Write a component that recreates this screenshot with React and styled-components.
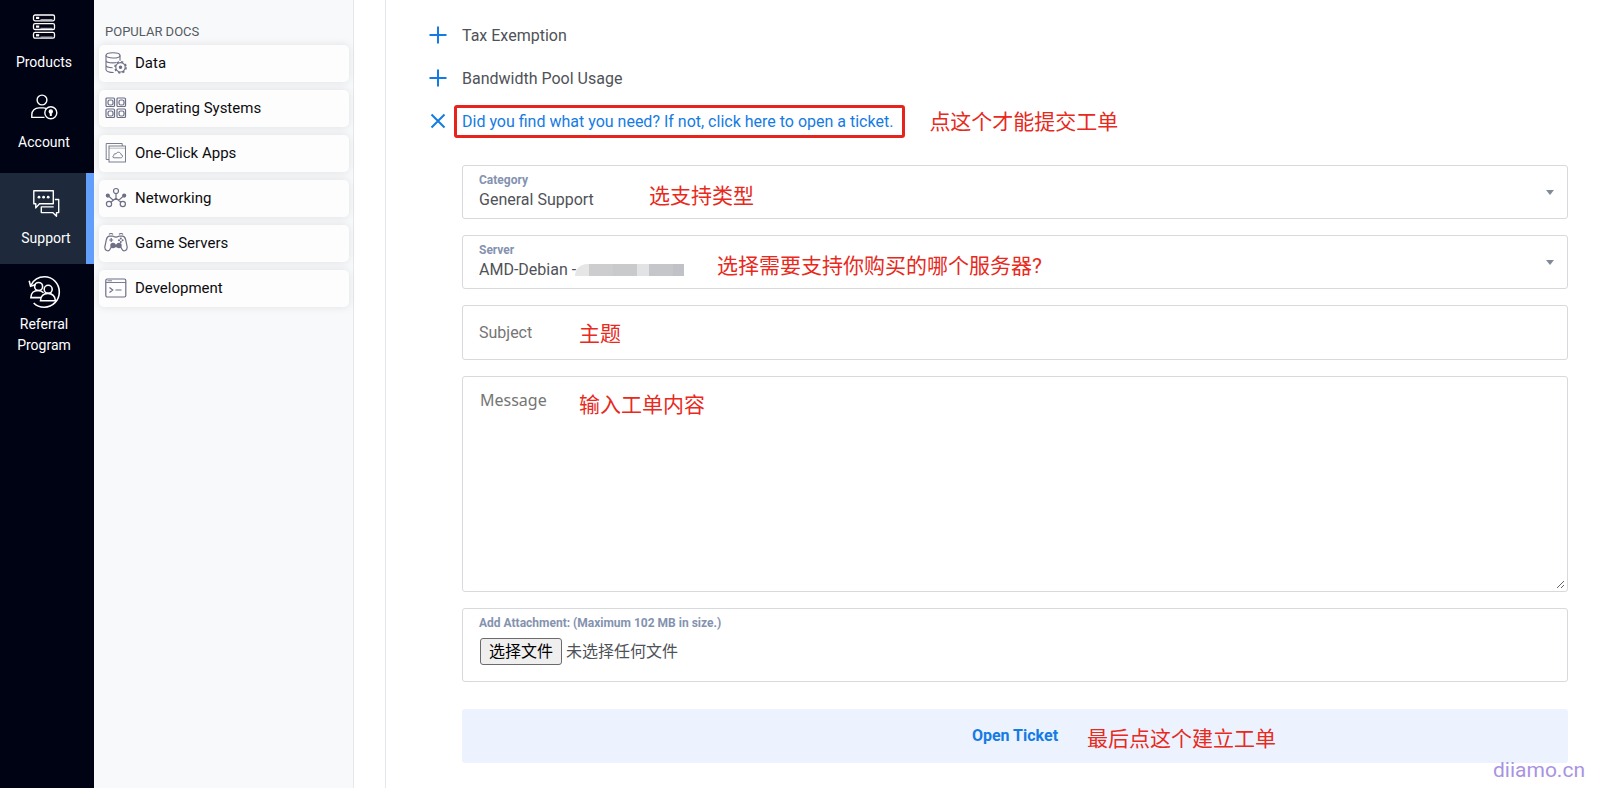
import { useState } from 'react';
import styled, { createGlobalStyle } from 'styled-components';

const GlobalStyle = createGlobalStyle`
  * {
    box-sizing: border-box;
  }
  body {
    margin: 0;
    background: #fff;
    color: #4f5258;
    font-family: Roboto, "Noto Sans CJK SC", sans-serif;
    font-size: 16px;
  }
  button, input, select {
    font-family: inherit;
    font-size: inherit;
  }
`;

const ProductsIcon = () => (
  <svg width='24' height='26' viewBox='0 0 24 26' fill='none' stroke='currentColor' strokeWidth='1.3'>
    {[1, 9.7, 18.4].map((y) => (
      <g key={y}>
        <rect x='1.5' y={y} width='21' height='5.8' rx='1.6' />
        <path d={`M4 ${y + 2.9}h3.2`} strokeWidth='2.2' />
        <path d={`M8.5 ${y + 4.6}h12`} strokeWidth='0.7' />
      </g>
    ))}
  </svg>
);

const AccountIcon = () => (
  <svg width='28' height='26' viewBox='0 0 28 26' fill='none' stroke='currentColor' strokeWidth='1.4'>
    <circle cx='12' cy='6' r='4.9' />
    <path d='M14.5 23.4H1.8v-2.8c0-4 3.2-6.7 7.2-6.7h4.3c1 0 2 .2 2.8.5' />
    <circle cx='20.8' cy='18.8' r='6' />
    <circle cx='20.8' cy='17.4' r='1.5' fill='currentColor' />
    <path d='M20.8 17.6v4.4' strokeWidth='2' />
  </svg>
);

const SupportIcon = () => (
  <svg width='28' height='28' viewBox='0 0 28 28' fill='none' stroke='currentColor' strokeWidth='1.4' strokeLinejoin='round'>
    <path d='M1.8 1.7h19.5v13.1H7.5l-3.7 4.1v-4.1h-2z' />
    <path d='M22.8 10.5h3.9v13.1h-2.2v3.7l-3.8-3.7H9.3v-5.7h12.4' />
    <g fill='currentColor' stroke='none'>
      <circle cx='7' cy='8.2' r='1.4' />
      <circle cx='11.6' cy='8.2' r='1.4' />
      <circle cx='16.2' cy='8.2' r='1.4' />
    </g>
  </svg>
);

const ReferralIcon = () => (
  <svg width='34' height='34' viewBox='0 0 34 34' fill='none' stroke='currentColor' strokeWidth='1.6'>
    <path d='M4.2 10C6.6 5 11.4 1.8 17.5 1.8c8.4 0 14.8 6.8 14.8 15.1S25.7 32.2 17.3 32.2c-4.500 0-8-1.400-10.600-4.200' />
    <path d='M2.2 5.700l1.400 5.500 5.300-1.800' />
    <circle cx='11.6' cy='11.5' r='4' />
    <path d='M14.2 22.600H3.900c0-4.300 3-7.100 7.200-7.100 2.400 0 4.200.9 5.400 2.300' />
    <circle cx='21.2' cy='14.3' r='4' />
    <path d='M13.5 25.800c0-4.600 3.200-7.400 7.400-7.400s7.500 2.800 7.500 7.400z' />
  </svg>
);

const DataIcon = () => (
  <svg width='22' height='22' viewBox='0 0 22 22' fill='none' stroke='currentColor' strokeWidth='1.1'>
    <ellipse cx='8' cy='3.4' rx='7' ry='2.6' />
    <path d='M1 3.400v14.400c0 1.400 3.400 2.700 7.600 2.700M15 3.400v5.400M1 8.200c0 1.500 3 2.700 7 2.700 1.500 0 2.600-.1 3.600-.4M1 13c0 1.500 3 2.700 6.600 2.700' />
    <circle cx='15.5' cy='15.3' r='4.7' />
    <circle cx='15.5' cy='15.3' r='5.6' strokeDasharray='2.2 2.2' strokeWidth='1.5' />
    <circle cx='15.5' cy='15.3' r='1.2' fill='currentColor' />
  </svg>
);

const SystemsIcon = () => (
  <svg width='22' height='22' viewBox='0 0 22 22' fill='none' stroke='currentColor' strokeWidth='1.2'>
    {[[1, 1], [12, 1], [1, 12], [12, 12]].map(([x, y]) => (
      <g key={`${x}-${y}`}>
        <rect x={x} y={y} width='8.5' height='8.5' rx='1' />
        <rect x={x + 2} y={y + 2} width='5' height='5' rx='1.8' />
      </g>
    ))}
  </svg>
);

const AppsIcon = () => (
  <svg width='22' height='22' viewBox='0 0 22 22' fill='none' stroke='currentColor' strokeWidth='0.9'>
    <path d='M4 17.500H1.200V1.500h16V4' />
    <rect x='4' y='4' width='16.5' height='16' />
    <path d='M4 6.200h16.500' strokeWidth='0.5' />
    <path d='M9 15.800h6.600c2.400 0 2.600-3 .4-3.200-.2-2.700-4-3.300-5-.8-1.800-.4-2.600 1-2.200 1.900-1.500.2-1.300 2.100.2 2.100z' />
  </svg>
);

const NetworkIcon = () => (
  <svg width='22' height='22' viewBox='0 0 22 22' fill='none' stroke='currentColor' strokeWidth='1.2'>
    <circle cx='11' cy='4' r='2.5' />
    <circle cx='4' cy='17' r='2.6' />
    <circle cx='17.8' cy='17' r='2.6' />
    <path d='M11 6.500v4.700l-5.200 4M11 11.200l5 4M3.200 8.800l5.200 4.600M18.800 8.800l-5.200 4.600' />
    <circle cx='2.8' cy='8.6' r='1.5' fill='currentColor' />
    <circle cx='19.2' cy='8.6' r='1.5' fill='currentColor' />
  </svg>
);

const GameIcon = () => (
  <svg width='24' height='22' viewBox='0 0 24 22' fill='none' stroke='currentColor' strokeWidth='1.2'>
    <path d='M5.500 4.200h3.300c1 0 1 .9 3.200.9s2.200-.9 3.200-.9h3.300c1.900 0 2.600 1.400 3.100 3.300l1.500 7.200c.6 3.700-3.500 5.600-5.100 2.600l-1.500-2.600h-9L6 17.300c-1.600 3-5.700 1.100-5.100-2.600l1.500-7.200c.5-1.900 1.200-3.300 3.100-3.300z' />
    <path d='M5 2.300c1-1.100 3-1.100 4 0M15 2.300c1-1.100 3-1.100 4 0M7.200 6v4M5.200 8h4' />
    <g fill='currentColor' stroke='none'>
      <circle cx='9' cy='13.5' r='2.7' />
      <circle cx='15' cy='13.5' r='2.7' />
      <path d='M9 12.500h6v2H9z' />
      <circle cx='16.8' cy='6.5' r='1' />
      <circle cx='16.8' cy='9.9' r='1' />
      <circle cx='15' cy='8.2' r='1' />
      <circle cx='18.6' cy='8.2' r='1' />
    </g>
  </svg>
);

const DevIcon = () => (
  <svg width='22' height='22' viewBox='0 0 22 22' fill='none' stroke='currentColor' strokeWidth='1.2'>
    <rect x='0.8' y='2' width='20' height='18' rx='1.5' />
    <path d='M.8 5.500h20M2.500 3.800h4.500' strokeWidth='0.9' />
    <path d='M4.500 10.500l3.200 2.500-3.200 2.500M10.500 13h6' />
  </svg>
);

const navItems = [
  { text: 'Products', icon: ProductsIcon },
  { text: 'Account', icon: AccountIcon },
  { text: 'Support', icon: SupportIcon, active: true },
  { text: 'Referral Program', icon: ReferralIcon, large: true },
];

const docs = [
  { text: 'Data', icon: DataIcon },
  { text: 'Operating Systems', icon: SystemsIcon },
  { text: 'One-Click Apps', icon: AppsIcon },
  { text: 'Networking', icon: NetworkIcon },
  { text: 'Game Servers', icon: GameIcon },
  { text: 'Development', icon: DevIcon },
];

const Toggle = ({ text, open, highlight, note, onClick }) => (
  <ToggleRow>
    <ToggleButton type='button' aria-expanded={!!open} $open={open} onClick={onClick}>
      <ToggleIcon width='18' height='18' viewBox='0 0 18 18'>
        <path d={open ? 'M2.500 2.500l13 13M15.500 2.500l-13 13' : 'M9 .5v17M.5 9h17'} />
      </ToggleIcon>
      <ToggleText $highlight={highlight}>{text}</ToggleText>
    </ToggleButton>
    {note && <Note>{note}</Note>}
  </ToggleRow>
);

const Arrow = () => (
  <ArrowIcon width='8' height='5' viewBox='0 0 8 5' aria-hidden='true'>
    <path d='M0 0h8L4 5z' fill='#818b98' />
  </ArrowIcon>
);

const App = () => {
  const [open, setOpen] = useState(true);
  const [fileName, setFileName] = useState('未选择任何文件');

  return (
    <Page>
      <GlobalStyle />
      <Sidebar>
        {navItems.map(({ text, icon: Icon, active, large }) => (
          <NavLink key={text} href='#' $active={active} $large={large}>
            <NavIcon $large={large}>
              <Icon />
            </NavIcon>
            {text}
          </NavLink>
        ))}
      </Sidebar>
      <Docs>
        <DocsTitle>POPULAR DOCS</DocsTitle>
        <DocsList>
          {docs.map(({ text, icon: Icon }) => (
            <DocCard key={text} href='#'>
              <DocIcon>
                <Icon />
              </DocIcon>
              {text}
            </DocCard>
          ))}
        </DocsList>
      </Docs>
      <Main>
        <Toggle text='Tax Exemption' />
        <Toggle text='Bandwidth Pool Usage' />
        <Toggle
          text='Did you find what you need? If not, click here to open a ticket.'
          open={open}
          highlight
          note='点这个才能提交工单'
          onClick={() => setOpen(!open)}
        />
        {open && (
          <Form onSubmit={(e) => e.preventDefault()}>
            <Field>
              <FieldLabel htmlFor='category'>Category</FieldLabel>
              <Select id='category'>
                <option>General Support</option>
              </Select>
              <Arrow />
              <FieldNote $left={186} $top={16}>选支持类型</FieldNote>
            </Field>
            <Field>
              <FieldLabel htmlFor='server'>Server</FieldLabel>
              <Select id='server'>
                <option>AMD-Debian -</option>
              </Select>
              <Mosaic />
              <Arrow />
              <FieldNote $left={254} $top={16}>选择需要支持你购买的哪个服务器?</FieldNote>
            </Field>
            <Field>
              <Input type='text' aria-label='Subject' placeholder='Subject' />
              <FieldNote $left={116} $top={14}>主题</FieldNote>
            </Field>
            <Field>
              <Textarea aria-label='Message' placeholder='Message' />
              <FieldNote $left={116} $top={14}>输入工单内容</FieldNote>
            </Field>
            <Field>
              <FieldLabel htmlFor='attachment'>Add Attachment: (Maximum 102 MB in size.)</FieldLabel>
              <FileRow>
                <FileInput
                  id='attachment'
                  type='file'
                  onChange={(e) => setFileName(e.target.files[0]?.name || '未选择任何文件')}
                />
                <FileButton htmlFor='attachment'>选择文件</FileButton>
                <span>{fileName}</span>
              </FileRow>
            </Field>
            <Submit type='submit'>
              <SubmitText>
                Open Ticket
                <SubmitNote>最后点这个建立工单</SubmitNote>
              </SubmitText>
            </Submit>
          </Form>
        )}
      </Main>
      <Watermark>diiamo.cn</Watermark>
    </Page>
  );
};

const Page = styled.div`
  display: flex;
  min-height: 100vh;
  position: relative;
`;

const Sidebar = styled.nav`
  flex: 0 0 94px;
  padding-top: 3px;
  background: #000314;
`;

const NavLink = styled.a`
  display: flex;
  flex-direction: column;
  align-items: center;
  gap: ${({ $large }) => ($large ? '5px' : '11px')};
  margin-top: ${({ $active }) => ($active ? '10px' : '0')};
  padding: ${({ $active, $large }) => ($active ? '16px 0 15px 6px' : $large ? '11px 0 10px 2px' : '10px 0 10px 2px')};
  border-right: 8px solid ${({ $active }) => ($active ? '#629ffb' : 'transparent')};
  background: ${({ $active }) => ($active ? '#1e293b' : 'transparent')};
  color: #fff;
  font-size: 14px;
  line-height: 21px;
  text-align: center;
  text-decoration: none;
`;

const NavIcon = styled.span`
  display: flex;
  align-items: center;
  justify-content: center;
  height: ${({ $large }) => ($large ? '34px' : '28px')};
`;

const Docs = styled.aside`
  flex: 0 0 260px;
  padding: 22px 4px 0 5px;
  border-right: 1px solid #e5e7ea;
  background: #f8f9fb;
`;

const DocsTitle = styled.h2`
  margin: 0;
  padding: 0 6px 3px;
  color: #555961;
  font-size: 13px;
  font-weight: 400;
  line-height: 20px;
`;

const DocsList = styled.div`
  display: flex;
  flex-direction: column;
  gap: 8px;
`;

const DocCard = styled.a`
  display: flex;
  align-items: center;
  gap: 8px;
  height: 37px;
  padding: 0 6px 2px;
  border-radius: 5px;
  background: #fdfdfe;
  box-shadow: 0 0 8px rgba(0, 0, 0, 0.1);
  color: #0c0c0e;
  font-size: 15px;
  text-decoration: none;
`;

const DocIcon = styled.span`
  display: flex;
  justify-content: center;
  width: 22px;
  color: #6c6f85;
  svg {
    flex: none;
  }
`;

const Main = styled.main`
  flex: 1;
  min-width: 0;
  margin-left: 31px;
  padding: 14px 31px 24px 43px;
  border-left: 1px solid #e5e7ea;
`;

const ToggleRow = styled.div`
  display: flex;
  align-items: center;
  gap: 24px;
  height: 43px;
`;

const ToggleButton = styled.button`
  display: flex;
  align-items: center;
  gap: 7px;
  padding: 0;
  border: none;
  background: none;
  color: ${({ $open }) => ($open ? '#157be4' : '#4f5258')};
  cursor: pointer;
`;

const ToggleIcon = styled.svg`
  margin-bottom: 2px;
  stroke: #157be4;
  stroke-width: 2px;
`;

const ToggleText = styled.span`
  padding: ${({ $highlight }) => ($highlight ? '0 9px 0 5px' : '0 5px')};
  border: 3px solid ${({ $highlight }) => ($highlight ? '#e8231d' : 'transparent')};
  border-radius: 3px;
  line-height: 27px;
`;

const Note = styled.span`
  color: #e8291c;
  font-size: 21px;
  font-weight: 400;
  line-height: 28px;
  white-space: nowrap;
`;

const FieldNote = styled(Note)`
  position: absolute;
  top: ${({ $top }) => $top}px;
  left: ${({ $left }) => $left}px;
  pointer-events: none;
`;

const Form = styled.form`
  display: flex;
  flex-direction: column;
  gap: 16px;
  padding: 22px 0 0 33px;
`;

const Field = styled.div`
  position: relative;
  display: flex;
  flex-direction: column;
  border: 1px solid #d8d9db;
  border-radius: 3px;
  background: #fff;
`;

const FieldLabel = styled.label`
  padding: 6px 16px 0;
  color: #8492af;
  font-size: 12px;
  font-weight: 700;
  line-height: 16px;
`;

const Select = styled.select`
  height: 30px;
  padding: 0 32px 8px 16px;
  border: none;
  appearance: none;
  background: transparent;
  color: #4f5258;
`;

const ArrowIcon = styled.svg`
  position: absolute;
  top: 24px;
  right: 13px;
  pointer-events: none;
`;

const Mosaic = styled.span`
  position: absolute;
  top: 28px;
  left: 112px;
  width: 109px;
  height: 12px;
  border-top-left-radius: 12px;
  background: linear-gradient(
    90deg,
    #e6e6e7 0 14px,
    #cdcdcf 14px 38px,
    #c9cacc 38px 62px,
    #e2e3e5 62px 74px,
    #c5c6ca 74px 98px,
    #c0c2c7 98px
  );
`;

const Input = styled.input`
  height: 53px;
  padding: 0 16px;
  border: none;
  background: transparent;
  &::placeholder {
    color: #757575;
  }
`;

const Textarea = styled.textarea`
  height: 212px;
  margin: 0 2px 2px 0;
  padding: 12px 17px;
  border: none;
  background: transparent;
  font-family: "Noto Sans", "Noto Sans CJK SC", sans-serif;
  font-size: 16px;
  resize: vertical;
  &::placeholder {
    color: #757575;
  }
`;

const FileRow = styled.div`
  display: flex;
  align-items: center;
  gap: 4px;
  padding: 7px 17px 16px;
  line-height: 25px;
`;

const FileInput = styled.input`
  position: absolute;
  width: 82px;
  height: 27px;
  opacity: 0;
`;

const FileButton = styled.label`
  padding: 0 8px;
  border: 1px solid #6b6b6b;
  border-radius: 3px;
  background: #efefef;
  color: #000;
`;

const Submit = styled.button`
  height: 54px;
  margin-top: 11px;
  padding: 0 0 2px;
  border: none;
  border-radius: 3px;
  background: #ecf3fe;
  color: #157be4;
  font-weight: 700;
  cursor: pointer;
`;

const SubmitText = styled.span`
  position: relative;
`;

const SubmitNote = styled(Note)`
  position: absolute;
  top: -1px;
  left: 100%;
  margin-left: 29px;
`;

const Watermark = styled.div`
  position: absolute;
  right: 14px;
  bottom: 4px;
  color: #a893e2;
  font-size: 21px;
  line-height: 28px;
`;

export default App;
